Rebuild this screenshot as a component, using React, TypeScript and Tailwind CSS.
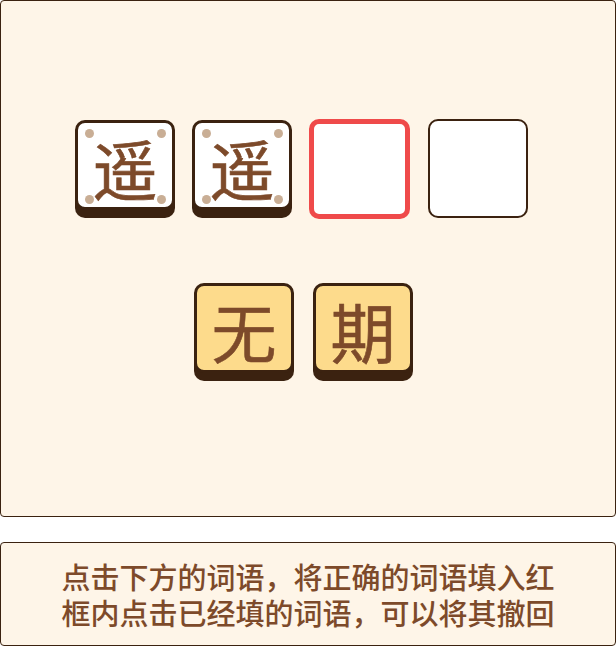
import React from 'react'

const cjk = { fontFamily: '"Noto Sans CJK SC", "Noto Sans", sans-serif' }

const placed = ['遥', '遥']
const options = ['无', '期']

function Dot({ pos }: { pos: string }) {
  return <span className={`absolute w-[9px] h-[9px] rounded-full bg-[#c9ae95] ${pos}`} />
}

function FilledTile({ ch }: { ch: string }) {
  return (
    <div className="relative w-[100px] h-[90px] rounded-[10px] border-[3px] border-[#3b2210] bg-white shadow-[0_8px_0_#3b2210] flex items-center justify-center">
      <Dot pos="top-[6px] left-[7px]" />
      <Dot pos="top-[6px] right-[6px]" />
      <Dot pos="bottom-[3px] left-[7px]" />
      <Dot pos="bottom-[3px] right-[6px]" />
      <span className="text-[65px] leading-none text-[#7d4a2a] mt-[4px] [-webkit-text-stroke:0.6px_#7d4a2a]">{ch}</span>
    </div>
  )
}

function OptionTile({ ch }: { ch: string }) {
  return (
    <div className="w-[100px] h-[90px] rounded-[10px] border-[3px] border-[#3b2210] bg-[#fddb8c] shadow-[0_8px_0_#3b2210] flex items-center justify-center">
      <span className="text-[65px] leading-none text-[#7d4a2a] mt-[4px] [-webkit-text-stroke:0.6px_#7d4a2a]">{ch}</span>
    </div>
  )
}

export default function App() {
  return (
    <div className="w-[616px] h-[646px] bg-white" style={cjk}>
      <div className="h-[517px] w-[616px] rounded-[4px] border border-[#3b2210] bg-[#fef5e8] pt-[118px]">
        <div className="flex items-start gap-[17px] pl-[74px]">
          {placed.map((c, i) => (
            <div key={i} className="pt-[1px]">
              <FilledTile ch={c} />
            </div>
          ))}
          <div className="w-[101px] h-[100px] rounded-[10px] border-[5px] border-[#ef4a4a] bg-white" />
          <div className="w-[100px] h-[99px] rounded-[10px] border-2 border-[#3b2210] bg-white ml-[1px]" />
        </div>
        <div className="flex gap-[19px] pl-[193px] mt-[64px]">
          {options.map(c => (
            <OptionTile key={c} ch={c} />
          ))}
        </div>
      </div>
      <div className="mt-[25px] h-[104px] w-[616px] rounded-[4px] border border-[#3b2210] bg-[#fef5e8] flex items-center justify-center">
        <p className="text-[29px] leading-[36px] font-medium text-[#7d4a2a] text-center w-[500px]">
          点击下方的词语，将正确的词语填入红框内点击已经填的词语，可以将其撤回
        </p>
      </div>
    </div>
  )
}
